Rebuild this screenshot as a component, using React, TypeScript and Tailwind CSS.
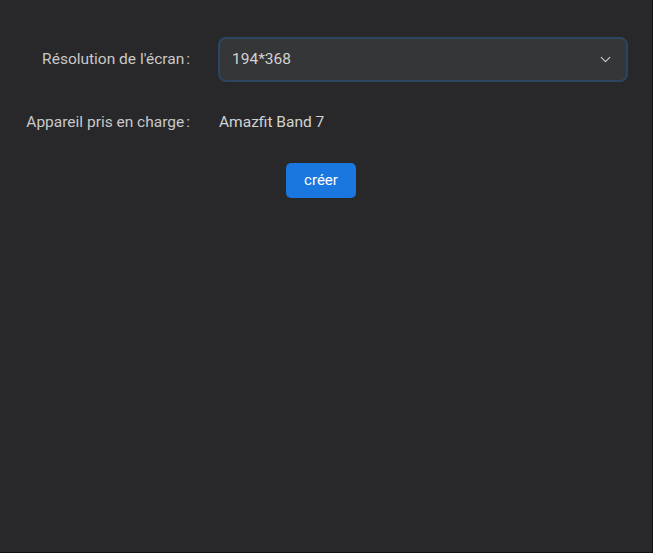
import { ChevronDown } from 'lucide-react';

const labelClass = 'w-[190px] shrink-0 text-right text-[15.5px] text-[#c9c9c9]';

export default function App() {
  return (
    <main className="h-[553px] w-[653px] border-r border-b border-[#121212] bg-[#28282a] font-['Roboto','Liberation_Sans',sans-serif]">
      <div className="flex flex-col pt-[37px] pr-[24px]">
        <div className="flex items-center">
          <span className={labelClass}>
            Résolution de l'écran<span className="ml-[2px]">:</span>
          </span>
          <button
            type="button"
            className="ml-[28px] flex h-[45px] flex-1 items-center justify-between rounded-[8px] border-2 border-[#2c4563] bg-[#353638] pl-[12px] pr-[12px] text-[15.5px] text-[#d2d2d2]"
          >
            <span>194*368</span>
            <ChevronDown size={17} strokeWidth={1.5} className="text-[#cfcfcf]" />
          </button>
        </div>

        <div className="mt-[24px] flex h-[33px] items-center">
          <span className={labelClass}>
            Appareil pris en charge<span className="ml-[2px]">:</span>
          </span>
          <span className="ml-[29px] text-[15.5px] text-[#d2d2d2]">Amazfit Band 7</span>
        </div>

        <div className="mt-[24px] flex justify-center pl-[14px]">
          <button
            type="button"
            className="h-[35px] w-[70px] rounded-[5px] bg-[#1a77e0] text-[15px] text-white"
          >
            créer
          </button>
        </div>
      </div>
    </main>
  );
}
